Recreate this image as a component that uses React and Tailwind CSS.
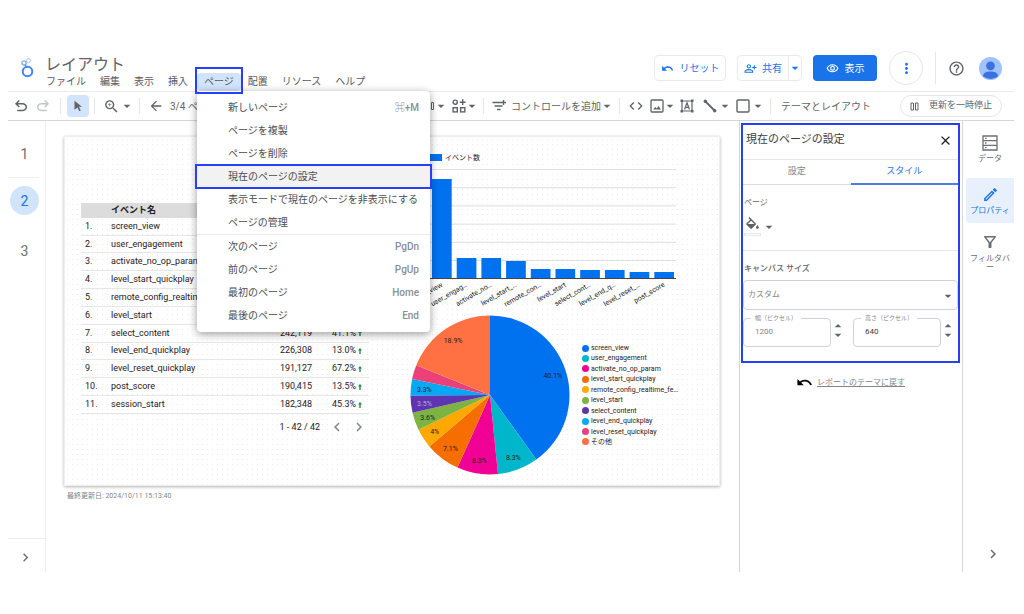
import React, { useState } from 'react';
import {
  MdArrowBack,
  MdArrowDropDown,
  MdArrowDropUp,
  MdChevronLeft,
  MdChevronRight,
  MdClose,
  MdCode,
  MdHelpOutline,
  MdMoreVert,
  MdOutlineEdit,
  MdOutlineFilterAlt,
  MdOutlinePersonAddAlt,
  MdOutlineVisibility,
  MdUndo,
  MdZoomIn,
} from 'react-icons/md';

const pageMenu = [
  { label: '新しいページ', shortcut: '⌘+M' },
  { label: 'ページを複製' },
  { label: 'ページを削除' },
  { label: '現在のページの設定', active: true },
  { label: '表示モードで現在のページを非表示にする' },
  { label: 'ページの管理' },
  { label: '次のページ', shortcut: 'PgDn', divider: true },
  { label: '前のページ', shortcut: 'PgUp' },
  { label: '最初のページ', shortcut: 'Home' },
  { label: '最後のページ', shortcut: 'End' },
];

const events = [
  { name: 'screen_view' },
  { name: 'user_engagement' },
  { name: 'activate_no_op_param' },
  { name: 'level_start_quickplay' },
  { name: 'remote_config_realtime' },
  { name: 'level_start' },
  { name: 'select_content', count: '242,119', change: '41.1%' },
  { name: 'level_end_quickplay', count: '226,308', change: '13.0%' },
  { name: 'level_reset_quickplay', count: '191,127', change: '67.2%' },
  { name: 'post_score', count: '190,415', change: '13.5%' },
  { name: 'session_start', count: '182,348', change: '45.3%' },
];

const bars = [
  { label: 'screen_view', value: 99 },
  { label: 'user_engag…', value: 20 },
  { label: 'activate_no…', value: 20 },
  { label: 'level_start_…', value: 17 },
  { label: 'remote_con…', value: 9 },
  { label: 'level_start', value: 9 },
  { label: 'select_cont…', value: 8 },
  { label: 'level_end_q…', value: 8 },
  { label: 'level_reset_…', value: 6 },
  { label: 'post_score', value: 6 },
];

const slices = [
  { label: 'screen_view', value: 40.1, color: '#0072f0', text: '40.1%' },
  { label: 'user_engagement', value: 8.3, color: '#00b6cb', text: '8.3%' },
  { label: 'activate_no_op_param', value: 8.3, color: '#f10096', text: '8.3%' },
  { label: 'level_start_quickplay', value: 7.1, color: '#f66d00', text: '7.1%' },
  { label: 'remote_config_realtime_fe…', value: 4, color: '#ffa800', text: '4%' },
  { label: 'level_start', value: 3.6, color: '#7cb342', text: '3.6%' },
  { label: 'select_content', value: 3.5, color: '#5e35b1', text: '3.5%', light: true },
  { label: 'level_end_quickplay', value: 3.3, color: '#03a9f4', text: '3.3%' },
  { label: 'level_reset_quickplay', value: 2.9, color: '#ec407a' },
  { label: 'その他', value: 18.9, color: '#ff7043', text: '18.9%' },
];

const Caret = () => <MdArrowDropDown size={16} className="-mx-[2px] shrink-0" />;

const Divider = ({ className }) => <div className={`h-4 w-px shrink-0 bg-[#e4e6e9] ${className}`} />;

const TurnArrow = ({ className }) => (
  <svg viewBox="0 -960 960 960" className={className} fill="currentColor">
    <path d="M280-200v-80h284q63 0 109.5-40T720-420q0-60-46.5-100T564-560H312l104 104-56 56-200-200 200-200 56 56-104 104h252q97 0 169.5 63T800-420q0 94-72.5 157T564-200H280Z" />
  </svg>
);

const PageMenu = () => (
  <ul className="absolute left-0 top-full z-20 w-[233px] rounded-sm bg-white pt-[5px] pb-[5px] text-[#4a4d51] shadow-[0_2px_8px_rgba(0,0,0,0.4)]">
    {pageMenu.map((item) => (
      <li key={item.label} className={item.divider ? 'border-t border-[#e8eaed]' : ''}>
        <button
          type="button"
          className={`relative flex h-[23px] w-full items-center justify-between pl-[31px] pr-[11px] whitespace-nowrap ${item.active ? 'bg-[#f2f2f2]' : ''}`}
        >
          {item.label}
          {item.shortcut && <span className="font-medium text-[#8a8f95]">{item.shortcut}</span>}
          {item.active && <span className="absolute -inset-x-[2px] -inset-y-px border-2 border-[#2540f5]" />}
        </button>
      </li>
    ))}
  </ul>
);

const Header = () => (
  <header className="flex h-[46px] items-center">
    <svg viewBox="0 0 14 20" className="ml-3 mr-[5px] h-5 w-[14px] shrink-0" fill="none">
      <circle cx="8.5" cy="2.6" r="2" stroke="#a9c7fb" strokeWidth="1" />
      <circle cx="4" cy="5" r="2.1" stroke="#7baaf7" strokeWidth="1.3" />
      <path d="M5.2 6.8l1 1.8" stroke="#4285f4" strokeWidth="1.3" />
      <circle cx="7.5" cy="13.5" r="4.8" stroke="#4285f4" strokeWidth="2" />
    </svg>
    <div className="self-start pt-3">
      <h1 className="h-4 pl-[6px] text-base leading-4 text-[#5f6368]">レイアウト</h1>
      <nav className="flex h-[18px] items-center text-[10px] leading-[18px] text-[#55595e]">
        {['ファイル', '編集', '表示', '挿入'].map((m) => (
          <button key={m} type="button" className="px-[7px]">{m}</button>
        ))}
        <div className="relative ml-[2px]">
          <button type="button" className="block h-[18px] rounded-sm bg-[#d2e3fc] px-[7px]">ページ</button>
          <PageMenu />
          <span className="pointer-events-none absolute -inset-x-[2px] -top-[6px] -bottom-[3px] z-30 border-2 border-[#2540f5]" />
        </div>
        {['配置', 'リソース', 'ヘルプ'].map((m) => (
          <button key={m} type="button" className="px-[7px]">{m}</button>
        ))}
      </nav>
    </div>

    <div className="ml-auto flex shrink-0 items-center pr-3 text-[10px] text-[#1a73e8]">
      <button type="button" className="flex h-[26px] w-[72px] items-center justify-center gap-[6px] rounded-sm border border-[#e8eaed]">
        <MdUndo size={13} />
        リセット
      </button>
      <div className="ml-[11px] flex h-[26px] rounded-sm border border-[#e8eaed]">
        <button type="button" className="flex w-[50px] items-center justify-center gap-[5px]">
          <MdOutlinePersonAddAlt size={13} />
          共有
        </button>
        <button type="button" aria-label="共有オプション" className="flex w-[13px] items-center justify-center border-l border-[#e8eaed]">
          <Caret />
        </button>
      </div>
      <button type="button" className="ml-[11px] flex h-[26px] w-16 items-center justify-center gap-[6px] rounded-sm bg-[#1a73e8] text-white">
        <MdOutlineVisibility size={13} />
        表示
      </button>
      <button type="button" aria-label="その他" className="ml-3 flex size-[34px] items-center justify-center rounded-full border border-[#e4e6e9]">
        <MdMoreVert size={17} />
      </button>
      <div className="ml-3 h-8 w-px bg-[#e4e6e9]" />
      <button type="button" aria-label="ヘルプを表示" className="ml-3 text-[#5f6368]">
        <MdHelpOutline size={17} />
      </button>
      <svg viewBox="0 0 23 23" className="ml-[14px] size-[23px]">
        <circle cx="11.5" cy="11.5" r="11.5" fill="#a0c3ff" />
        <circle cx="11.5" cy="8.8" r="4.4" fill="#3b72e0" />
        <path d="M4 19.200c0-3.400 3.500-4.700 7.500-4.700s7.500 1.300 7.500 4.700a11.500 11.500 0 0 1-15 0Z" fill="#3b72e0" />
      </svg>
    </div>
  </header>
);

const Toolbar = () => (
  <div className="flex h-[30px] items-center border-t border-b border-t-[#e8eaed] border-b-[#d3d6da] text-[10px] text-[#5f6368]">
    <button type="button" aria-label="元に戻す" className="ml-1">
      <TurnArrow className="size-[18px]" />
    </button>
    <button type="button" aria-label="やり直す" className="ml-1 text-[#c4c7ca]">
      <TurnArrow className="size-[18px] -scale-x-100" />
    </button>
    <Divider className="ml-2" />
    <button type="button" aria-label="選択" className="ml-[6px] flex h-[22px] w-[22px] items-center justify-center rounded-sm bg-[#d2e3fc]">
      <svg viewBox="0 0 12 12" className="size-3" fill="currentColor">
        <path d="M2.500 0.800l7.500 6H6.900l1.900 3.800-1.500.7-1.800-3.800-3 2.200Z" />
      </svg>
    </button>
    <Divider className="ml-[5px]" />
    <button type="button" aria-label="ズーム" className="ml-2 flex items-center gap-px">
      <MdZoomIn size={17} />
      <Caret />
    </button>
    <Divider className="ml-[6px]" />
    <button type="button" aria-label="前のページへ" className="ml-2">
      <MdArrowBack size={16} />
    </button>
    <span className="ml-[6px] whitespace-nowrap">3/4 ページ</span>

    <div className="ml-auto flex shrink-0 items-center pr-3">
      <button type="button" aria-label="グラフ" className="flex items-center gap-px">
        <svg viewBox="0 0 12 12" className="size-3" fill="none" stroke="currentColor">
          <path d="M1.500 2.500h3v7h-3zM9.500 2.500h2v7h-2z" />
        </svg>
        <Caret />
      </button>
      <button type="button" aria-label="コミュニティ ビジュアリゼーション" className="ml-[5px] flex items-center">
        <svg viewBox="0 0 14 14" className="size-[14px]" fill="none" stroke="currentColor" strokeWidth="1.4">
          <circle cx="3.200" cy="3.200" r="2.100" />
          <path d="M10.700 0.300v5.800M7.800 3.200h5.800" />
          <rect x="1.100" y="8.700" width="4.200" height="4.200" />
          <rect x="8.600" y="8.700" width="4.200" height="4.200" />
        </svg>
        <Caret />
      </button>
      <Divider className="ml-[5px]" />
      <button type="button" className="ml-2 flex items-center">
        <svg viewBox="0 0 15 14" className="mr-[4px] h-[14px] w-[15px]" fill="none" stroke="currentColor" strokeWidth="1.400">
          <path d="M0.500 3.500h9M2.500 7h8M5 10.500h3.500M11.500 1v5M9 3.500h5" />
        </svg>
        コントロールを追加
        <Caret />
      </button>
      <Divider className="ml-[6px]" />
      <button type="button" aria-label="URL の埋め込み" className="ml-2">
        <MdCode size={16} />
      </button>
      <button type="button" aria-label="画像" className="ml-[6px] flex items-center">
        <svg viewBox="0 0 14 14" className="size-[14px]" fill="none" stroke="currentColor" strokeWidth="1.300">
          <rect x="1" y="1" width="12" height="12" rx="1" />
          <path d="M3.200 10.500l2-2.500 1.500 1.600L8.600 7l2.300 3.500Z" fill="currentColor" stroke="none" />
        </svg>
        <Caret />
      </button>
      <button type="button" aria-label="テキスト" className="ml-1">
        <svg viewBox="0 0 14 14" className="size-[14px]" fill="none" stroke="currentColor" strokeWidth="1.200">
          <path d="M2 2h10v10H2zM4.500 10.500L7 3.800l2.500 6.700M5.400 8.300h3.200" />
          <path d="M.5.5h2.500v2.500H.5zM11 .5h2.500v2.500H11zM.5 11h2.500v2.500H.5zM11 11h2.500v2.500H11z" fill="currentColor" stroke="none" />
        </svg>
      </button>
      <button type="button" aria-label="線" className="ml-[9px] flex items-center gap-[2px]">
        <svg viewBox="0 0 14 14" className="size-[14px]" fill="currentColor" stroke="currentColor">
          <path d="M2.500 2.500l9 9" strokeWidth="1.800" />
          <circle cx="2.300" cy="2.300" r="1.300" />
          <circle cx="11.700" cy="11.700" r="1.300" />
        </svg>
        <Caret />
      </button>
      <button type="button" aria-label="図形" className="ml-[5px] flex items-center gap-[2px]">
        <svg viewBox="0 0 14 14" className="size-[14px]" fill="none" stroke="currentColor" strokeWidth="1.400">
          <rect x="1" y="1" width="12" height="12" rx="1" />
        </svg>
        <Caret />
      </button>
      <Divider className="ml-[6px]" />
      <button type="button" className="ml-[10px]">テーマとレイアウト</button>
      <button type="button" className="ml-[29px] flex h-[22px] w-[102px] items-center justify-center gap-[10px] rounded-full border border-[#e4e6e9] text-[9px]">
        <svg viewBox="0 0 9 9" className="size-[9px]" fill="none" stroke="currentColor">
          <path d="M1 1h2.500v7H1zM5.500 1H8v7H5.500z" />
        </svg>
        更新を一時停止
      </button>
    </div>
  </div>
);

const PageRail = () => (
  <aside className="flex w-[38px] shrink-0 flex-col border-r border-[#eceef0] text-sm text-[#6b6f74]">
    <button type="button" className="mt-[18px] h-[30px] pr-1">1</button>
    <div className="mt-2 mr-[6px] border-t border-[#eceef0]" />
    <button type="button" className="mt-2 ml-[2px] size-[29px] shrink-0 rounded-full bg-[#d2e3fc] text-[#1a73e8]">2</button>
    <button type="button" className="mt-[21px] h-[30px] pr-1">3</button>
    <button type="button" aria-label="展開" className="mt-auto flex h-[34px] items-center justify-center border-t border-[#eceef0] pt-1 pr-[2px]">
      <MdChevronRight size={17} />
    </button>
  </aside>
);

const EventTable = () => (
  <div className="w-[288px] text-[9px] leading-[11px] text-[#1f2023]">
    <table className="h-[211px] w-full table-fixed border-collapse">
      <thead>
        <tr className="h-[15px] bg-[#dcdcdc] text-left">
          <th className="w-[30px] p-0" />
          <th className="p-0">イベント名</th>
          <th className="w-[50px] p-0" />
          <th className="w-[57px] p-0" />
        </tr>
      </thead>
      <tbody>
        {events.map((row, i) => (
          <tr key={row.name} className="border-b border-[#e6e6e6]">
            <td className="p-0 pl-1">{i + 1}.</td>
            <td className="overflow-hidden p-0 whitespace-nowrap">{row.name}</td>
            <td className="p-0 text-right">{row.count}</td>
            <td className="p-0 pl-[20px]">
              {row.change && (
                <div className="flex items-center gap-[2px]">
                  {row.change}
                  <svg viewBox="0 0 4 6" className="h-[6px] w-1" fill="#1e8e3e">
                    <path d="M2 0l2 2.500H2.700V6H1.300V2.500H0z" />
                  </svg>
                </div>
              )}
            </td>
          </tr>
        ))}
      </tbody>
    </table>
    <div className="mt-1 flex items-center justify-end">
      <span>1 - 42 / 42</span>
      <button type="button" aria-label="前へ" className="ml-[8px] text-[#80868b]">
        <MdChevronLeft size={18} />
      </button>
      <button type="button" aria-label="次へ" className="ml-[4px] mr-px text-[#80868b]">
        <MdChevronRight size={18} />
      </button>
    </div>
  </div>
);

const BarChart = () => (
  <svg viewBox="0 0 270 160" className="h-[160px] w-[270px]">
    <rect x="0" y="4" width="35" height="7" fill="#0072f0" />
    <text x="38" y="10" fontSize="7" fill="#222">イベント数</text>
    {[0, 1, 2, 3, 4, 5].map((i) => (
      <rect key={i} x="10" y={19 + i * 18.2} width="259" height="1" fill="#dedede" />
    ))}
    {bars.map((bar, i) => (
      <g key={i}>
        <rect x={25 + i * 24.7} y={128 - bar.value} width="19.700" height={bar.value} fill="#0072f0" />
        <text
          x={36 + i * 24.7}
          y="136"
          fontSize="7"
          fill="#222"
          textAnchor="end"
          transform={`rotate(-30 ${36 + i * 24.7} 136)`}
        >
          {bar.label}
        </text>
      </g>
    ))}
    <rect x="10" y="128" width="259" height="1" fill="#444" />
  </svg>
);

const PieChart = () => {
  const c = 80;
  const r = 79.5;
  const point = (pct, radius) => {
    const a = (pct / 100) * 2 * Math.PI;
    return [c + radius * Math.sin(a), c - radius * Math.cos(a)];
  };
  let total = 0;

  return (
    <svg viewBox="0 0 160 160" className="size-[160px]">
      {slices.map((s) => {
        const start = total;
        total += s.value;
        const [x1, y1] = point(start, r);
        const [x2, y2] = point(total, r);
        const [tx, ty] = point(start + s.value / 2, 66);
        return (
          <g key={s.label}>
            <path d={`M${c} ${c}L${x1} ${y1}A${r} ${r} 0 0 1 ${x2} ${y2}Z`} fill={s.color} />
            {s.text && (
              <text x={tx} y={ty + 3} fontSize="7" textAnchor="middle" fill={s.light ? '#b9a5dd' : '#222'}>
                {s.text}
              </text>
            )}
          </g>
        );
      })}
    </svg>
  );
};

const Canvas = () => (
  <main className="min-w-0 flex-1 pt-[15px] pl-[18px] pr-[19px]">
    <div className="flex h-[350px] border border-[#eceef0] bg-[radial-gradient(#ededed_0.500px,transparent_1px)] bg-[size:5px_5px] shadow-[0_1px_3px_rgba(0,0,0,0.3)]">
      <div className="pt-[66px] pl-4">
        <EventTable />
      </div>
      <div className="ml-[38px] pt-[13px]">
        <BarChart />
        <div className="mt-[5px] ml-[3px] flex items-center">
          <PieChart />
          <ul className="ml-3 flex h-[104px] shrink-0 flex-col justify-between text-[7px] leading-[10px] text-[#1f2023]">
            {slices.map((s) => (
              <li key={s.label} className="flex h-[10px] items-center gap-[2px] whitespace-nowrap">
                <span className="size-[7px] rounded-full" style={{ backgroundColor: s.color }} />
                {s.label}
              </li>
            ))}
          </ul>
        </div>
      </div>
    </div>
    <p className="mt-1 pl-[3px] text-[7px] leading-3 text-[#80868b]">最終更新日: 2024/10/11 15:13:40</p>
  </main>
);

const SizeField = ({ id, label, value, onChange, className }) => (
  <div className="flex items-center">
    <fieldset className="h-[33px] w-[88px] rounded-sm border border-[#cfd2d6] px-[7px]">
      <legend className="px-1 text-[6px] leading-[8px] text-[#80868b]">
        <label htmlFor={id}>{label}</label>
      </legend>
      <input
        id={id}
        value={value}
        onChange={(e) => onChange(e.target.value)}
        className={`block h-[19px] w-full px-1 text-[8px] outline-none ${className}`}
      />
    </fieldset>
    <div className="-ml-px flex flex-col text-[#5f6368]">
      <button type="button" aria-label="増やす" className="flex h-[9px] items-center"><MdArrowDropUp size={16} /></button>
      <button type="button" aria-label="減らす" className="flex h-[9px] items-center"><MdArrowDropDown size={16} /></button>
    </div>
  </div>
);

const PropertyPanel = () => {
  const [width, setWidth] = useState('1200');
  const [height, setHeight] = useState('640');

  return (
    <section className="w-[224px] shrink-0 border-x border-[#d3d6da] pt-[2px] pl-px pr-[2px] text-[8px] text-[#5f6368]">
      <div className="h-[240px] border-2 border-[#2540f5]">
        <div className="flex h-[35px] items-center justify-between border-b border-[#e4e6e9] pb-[3px] pl-[3px] pr-[5px]">
          <h2 className="text-[11px] text-[#3c4043]">現在のページの設定</h2>
          <button type="button" aria-label="閉じる" className="text-[#202124]"><MdClose size={15} /></button>
        </div>
        <div className="flex h-[25px] border-b border-[#dadce0] text-[9px]">
          <button type="button" className="flex-1 text-[#80868b]">設定</button>
          <button type="button" className="-mb-px flex-1 border-b-2 border-[#4f7bdc] text-[#2f6fe4]">スタイル</button>
        </div>
        <div className="h-[66px] border-b border-[#e4e6e9] pt-3 pl-px">
          <div className="leading-3">ページ</div>
          <button type="button" aria-label="背景色" className="mt-2 flex items-center gap-[2px]">
            <span>
              <svg viewBox="0 0 24 20" className="h-[14px] w-[17px]" fill="currentColor">
                <path d="M16.560 8.940 7.620 0 6.210 1.410l2.380 2.380-5.150 5.150a1.490 1.490 0 0 0 0 2.120l5.500 5.500c.29.29.68.44 1.060.44s.77-.15 1.060-.44l5.500-5.500c.59-.58.59-1.530 0-2.120zM5.210 10 10 5.210 14.790 10H5.210zM19 11.500s-2 2.170-2 3.500c0 1.100.9 2 2 2s2-.9 2-2c0-1.330-2-3.500-2-3.500z" />
              </svg>
              <span className="mt-[2px] block h-[3px] w-[17px] border border-[#e4e6e9]" />
            </span>
            <Caret />
          </button>
        </div>
        <label htmlFor="canvas-size" className="block pt-3 pl-px font-medium leading-3">キャンバス サイズ</label>
        <div className="relative mt-[5px]">
          <select id="canvas-size" className="h-[30px] w-full appearance-none rounded-sm border border-[#cfd2d6] pl-1 text-[#80868b]">
            <option>カスタム</option>
          </select>
          <MdArrowDropDown size={16} className="pointer-events-none absolute top-2 right-[2px]" />
        </div>
        <div className="mt-1 flex justify-between pr-[2px]">
          <SizeField id="canvas-width" label="幅（ピクセル）" value={width} onChange={setWidth} className="text-[#80868b]" />
          <SizeField id="canvas-height" label="高さ（ピクセル）" value={height} onChange={setHeight} className="text-[#3c4043]" />
        </div>
      </div>
      <div className="mt-[11px] flex items-center justify-center">
        <MdUndo size={17} className="mr-1 text-black" />
        <a href="#theme" className="text-[#80868b] underline">レポートのテーマに戻す</a>
      </div>
    </section>
  );
};

const SideTabs = () => (
  <aside className="flex w-[51px] shrink-0 flex-col items-end text-[8px] leading-[9px] text-[#6b6f74]">
    <button type="button" className="mt-[10px] flex h-[45px] w-12 flex-col items-center pt-1">
      <svg viewBox="0 0 16 16" className="mb-[3px] size-4" fill="none" stroke="currentColor" strokeWidth="1.300">
        <path d="M1 1h14v14H1zM1 5.700h14M1 10.300h14M3 3.400h1.500M3 8h1.500M3 12.700h1.500" />
      </svg>
      データ
    </button>
    <button type="button" className="mt-[2px] flex h-[45px] w-12 flex-col items-center rounded-l-sm bg-[#e8f0fe] pt-2 text-[#1a73e8]">
      <MdOutlineEdit size={17} className="mb-[3px]" />
      プロパティ
    </button>
    <button type="button" className="mt-2 flex w-12 flex-col items-center px-[3px] pt-[2px]">
      <MdOutlineFilterAlt size={18} className="mb-[3px]" />
      フィルタバー
    </button>
    <button type="button" aria-label="パネルを閉じる" className="mt-auto mr-3 mb-[9px]">
      <MdChevronRight size={18} />
    </button>
  </aside>
);

export default function App() {
  return (
    <div className="flex min-h-screen flex-col bg-white pt-[45px] pr-[10px] pb-[42px] pl-2 font-[Roboto,'Noto_Sans_CJK_JP',sans-serif]">
      <Header />
      <Toolbar />
      <div className="flex flex-1">
        <PageRail />
        <Canvas />
        <PropertyPanel />
        <SideTabs />
      </div>
    </div>
  );
}
